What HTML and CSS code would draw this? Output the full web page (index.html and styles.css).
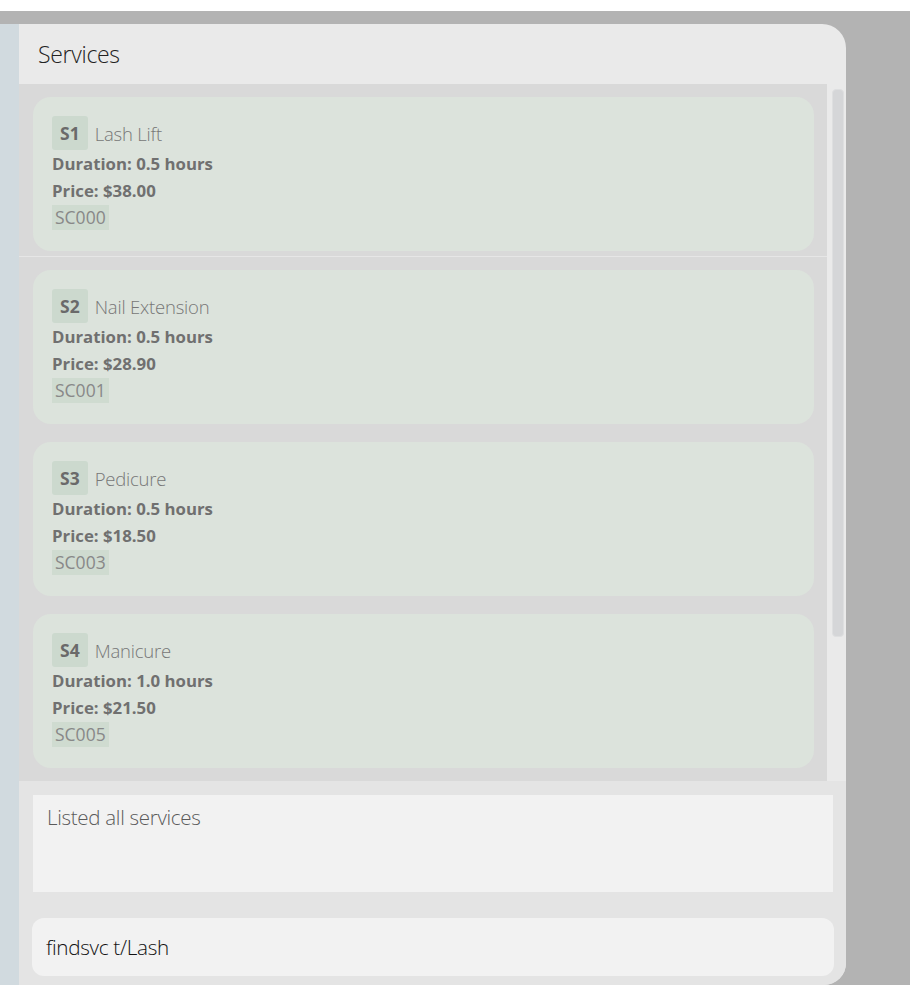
FILE: index.html
```html
<!DOCTYPE html>
<html>
<head>
<meta charset="utf-8">
<link rel="stylesheet" href="styles.css">
</head>
<body>
<div class="stage">
  <div class="side"></div>
  <div class="panel">
    <div class="header">Services</div>
    <div class="listwrap">
      <div class="list">
        <div class="cell cell-first">
          <div class="card">
            <div class="titlerow"><span class="badge">S1</span><span class="name">Lash Lift</span></div>
            <div class="line">Duration: 0.5 hours</div>
            <div class="line">Price: $38.00</div>
            <div class="tagrow"><span class="tag">SC000</span></div>
          </div>
        </div>
        <div class="cell">
          <div class="card">
            <div class="titlerow"><span class="badge">S2</span><span class="name">Nail Extension</span></div>
            <div class="line">Duration: 0.5 hours</div>
            <div class="line">Price: $28.90</div>
            <div class="tagrow"><span class="tag">SC001</span></div>
          </div>
        </div>
        <div class="cell">
          <div class="card">
            <div class="titlerow"><span class="badge">S3</span><span class="name">Pedicure</span></div>
            <div class="line">Duration: 0.5 hours</div>
            <div class="line">Price: $18.50</div>
            <div class="tagrow"><span class="tag">SC003</span></div>
          </div>
        </div>
        <div class="cell">
          <div class="card">
            <div class="titlerow"><span class="badge">S4</span><span class="name">Manicure</span></div>
            <div class="line">Duration: 1.0 hours</div>
            <div class="line">Price: $21.50</div>
            <div class="tagrow"><span class="tag">SC005</span></div>
          </div>
        </div>
      </div>
      <div class="scroll"><div class="thumb"></div></div>
    </div>
    <div class="bottom">
      <div class="result">Listed all services</div>
      <div class="command">findsvc t/Lash</div>
    </div>
  </div>
</div>
</body>
</html>
```

FILE: styles.css
```css
html, body {
  margin: 0;
  padding: 0;
  background: #ffffff;
}

body {
  padding-top: 11px;
  font-family: "Open Sans", "Noto Sans", sans-serif;
}

.stage {
  background: #b3b3b3;
  padding-top: 13px;
  height: 974px;
  display: flex;
  box-sizing: border-box;
}

.side {
  width: 19px;
  background: #d1dadf;
  flex: none;
}

.panel {
  width: 827px;
  height: 961px;
  background: #eaeaea;
  border-radius: 0 24px 22px 0;
  overflow: hidden;
  display: flex;
  flex-direction: column;
  flex: none;
}

.header {
  height: 60px;
  padding-left: 19px;
  display: flex;
  align-items: center;
  font-size: 23px;
  font-weight: 300;
  color: #222222;
  letter-spacing: -0.3px;
  box-sizing: border-box;
  padding-bottom: 1px;
}

.listwrap {
  height: 697px;
  display: flex;
  flex: none;
}

.list {
  width: 808px;
  background: #d9d9d9;
  overflow: hidden;
  box-sizing: border-box;
  padding: 0 13px 0 14px;
}

.cell {
  padding: 13px 0 5px;
}

.cell-first {
  border-bottom: 1px solid #e6e6e6;
  margin: 0 -13px 0 -14px;
  padding-left: 14px;
  padding-right: 13px;
}

.card {
  height: 154px;
  box-sizing: border-box;
  background: #dce3dc;
  border-radius: 18px;
  padding: 19px 19px 0;
  color: #6e6e6e;
}

.titlerow {
  height: 34px;
  display: flex;
  align-items: center;
}

.badge {
  height: 34px;
  padding: 0 8px;
  display: flex;
  align-items: center;
  background: #ccd9ce;
  border-radius: 3px;
  font-weight: 700;
  font-size: 17.5px;
  color: #6a6a6a;
  box-sizing: border-box;
}

.name {
  margin-left: 7px;
  font-size: 18.5px;
  font-weight: 300;
  color: #777777;
  letter-spacing: -0.2px;
}

.line {
  height: 27px;
  line-height: 27px;
  font-size: 16.8px;
  font-weight: 700;
  color: #707070;
}

.tagrow {
  margin-top: 1px;
  display: flex;
}

.tag {
  height: 25px;
  line-height: 25px;
  padding: 0 3px;
  background: #cfdbd0;
  font-size: 17.5px;
  color: #888888;
}

.scroll {
  width: 19px;
  background: #eaeaea;
  position: relative;
}

.thumb {
  margin: 5px 0 0 5px;
  width: 12px;
  height: 548px;
  background: #d5d6d8;
  border: 1px solid #dedfe0;
  border-radius: 4px;
  box-sizing: border-box;
}

.bottom {
  flex: 1;
  background: #e4e4e4;
  padding: 14px 0 0 13px;
}

.result {
  margin-left: 1px;
  width: 800px;
  height: 97px;
  box-sizing: border-box;
  background: #f2f2f2;
  padding: 8px 14px 0;
  font-size: 20.5px;
  font-weight: 300;
  color: #5a5a5a;
  letter-spacing: -0.3px;
}

.command {
  margin-top: 26px;
  width: 802px;
  height: 58px;
  box-sizing: border-box;
  background: #f2f2f2;
  border-radius: 12px;
  padding-left: 14px;
  display: flex;
  align-items: center;
  font-size: 20.7px;
  font-weight: 300;
  color: #111111;
  letter-spacing: -0.3px;
}
```
